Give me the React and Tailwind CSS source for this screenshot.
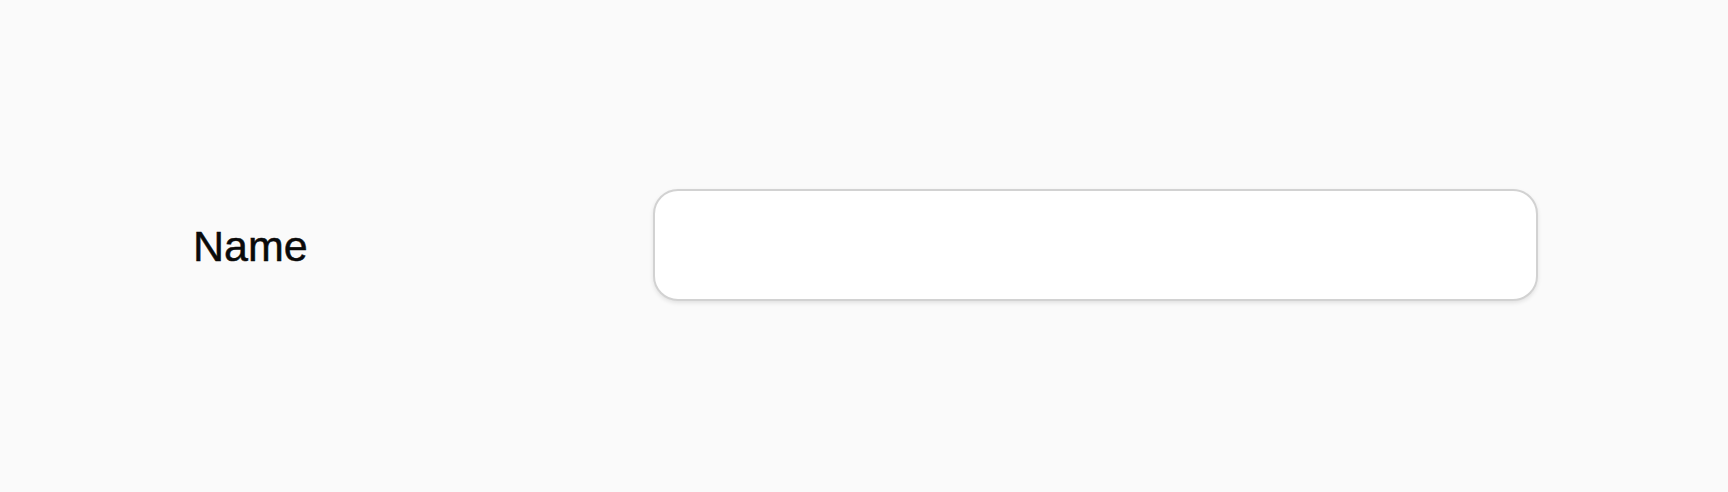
import React from 'react';

export default function App() {
  return (
    <div
      className="flex h-[492px] w-full items-center bg-[#fafafa]"
      style={{ fontFamily: '"Liberation Sans", Arial, sans-serif' }}
    >
      <label
        htmlFor="name"
        className="w-[653px] shrink-0 pl-[193px] pt-[1px] text-[43px] leading-none text-[#0a0a0a] [-webkit-text-stroke:0.5px_#0a0a0a]"
      >
        Name
      </label>
      <input
        id="name"
        type="text"
        className="mb-[2px] h-[112px] w-[885px] rounded-[25px] border-2 border-[#d2d2d2] bg-white px-6 text-[42px] shadow-[0_2px_4px_rgba(0,0,0,0.1)] outline-none"
      />
    </div>
  );
}
